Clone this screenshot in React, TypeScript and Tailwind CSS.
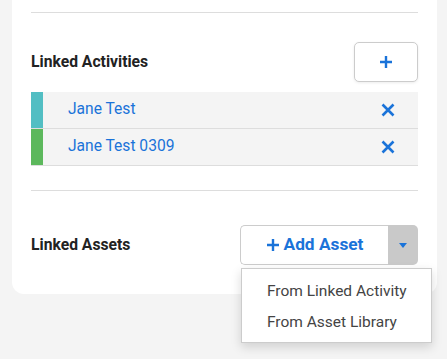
import React from "react";

const Plus = ({ size = 14, stroke = 2.4 }: { size?: number; stroke?: number }) => (
  <svg width={size} height={size} viewBox="0 0 14 14" fill="none">
    <path d="M7 1v12M1 7h12" stroke="#1a73d9" strokeWidth={stroke} strokeLinecap="butt" />
  </svg>
);

const XIcon = () => (
  <svg width="14" height="14" viewBox="0 0 14 14" fill="none">
    <path d="M1.5 1.5l11 11M12.5 1.5l-11 11" stroke="#1a73d9" strokeWidth="2.6" />
  </svg>
);

export default function App() {
  const rows = [
    { name: "Jane Test", color: "bg-[#52bec3]" },
    { name: "Jane Test 0309", color: "bg-[#5cb85c]" },
  ];
  return (
    <div className="w-full h-[359px] bg-[#f4f4f4] overflow-hidden" style={{ fontFamily: "Roboto, 'Liberation Sans', sans-serif" }}>
      <div className="ml-[12px] w-[425px] bg-white rounded-b-[12px] px-[19px] pt-[12px] pb-[29px]">
        <div className="h-px bg-[#dddddd]" />
        <div className="mt-[29px] flex items-center justify-between h-[40px]">
          <div className="text-[15.7px] font-bold text-[#222]">Linked Activities</div>
          <button className="w-[64px] h-[40px] border border-[#cccccc] rounded-[5px] bg-white flex items-center justify-center shadow-[0_1px_3px_rgba(0,0,0,0.08)]">
            <Plus />
          </button>
        </div>
        <div className="mt-[10px]">
          {rows.map((r) => (
            <div key={r.name} className="flex h-[37px] bg-[#f4f4f4] border-b border-[#dddddd]">
              <div className={`w-[12px] ${r.color}`} />
              <div className="flex-1 flex items-center justify-between pl-[25px] pr-[23px]">
                <span className="text-[15.6px] text-[#1a73d9]">{r.name}</span>
                <XIcon />
              </div>
            </div>
          ))}
        </div>
        <div className="mt-[24px] h-px bg-[#dddddd]" />
        <div className="mt-[34px] flex items-center justify-between h-[40px]">
          <div className="text-[15.7px] font-bold text-[#222]">Linked Assets</div>
          <div className="relative flex h-[40px]">
            <button className="w-[148px] h-[40px] border border-[#cccccc] border-r-0 rounded-l-[5px] bg-white flex items-center justify-center gap-[4px] text-[17.3px] font-bold text-[#1a73d9]">
              <Plus size={14} stroke={2.4} />
              <span>Add Asset</span>
            </button>
            <button className="w-[30px] h-[40px] bg-[#c9c9c9] rounded-r-[5px] flex items-center justify-center">
              <svg width="8" height="5" viewBox="0 0 8 5">
                <path d="M0 0h8L4 5z" fill="#1a73d9" />
              </svg>
            </button>
            <div className="absolute left-[1px] top-[43px] w-[191px] h-[75px] bg-white border border-[#cccccc] shadow-[0_4px_10px_rgba(0,0,0,0.15)] pt-[10px] text-[15.5px] text-[#444]">
              <div className="pl-[25px] h-[31px] leading-[24px]">From Linked Activity</div>
              <div className="pl-[25px] h-[31px] leading-[24px]">From Asset Library</div>
            </div>
          </div>
        </div>
      </div>
    </div>
  );
}
